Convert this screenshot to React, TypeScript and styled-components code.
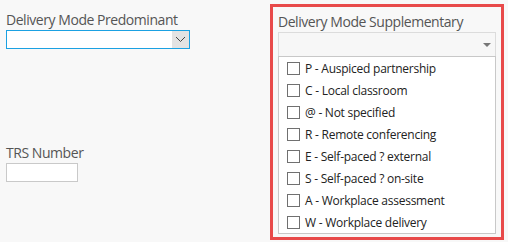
import React from "react";
import styled, { createGlobalStyle } from "styled-components";

const Global = createGlobalStyle`
  html, body { margin: 0; padding: 0; background: #f8f8f8; }
  body { font-family: "Open Sans", "Noto Sans", sans-serif; }
`;

const Page = styled.div`
  display: flex;
  width: 508px;
  height: 242px;
  box-sizing: border-box;
`;

const LeftCol = styled.div`
  width: 270px;
  padding-left: 6px;
  box-sizing: border-box;
  display: flex;
  flex-direction: column;
`;

const Label = styled.div<{ $top: number }>`
  margin-top: ${(p) => p.$top}px;
  height: 21px;
  font-size: 14px;
  line-height: 21px;
  color: #555;
  letter-spacing: -0.45px;
  white-space: nowrap;
`;

const Combo = styled.div`
  width: 184px;
  height: 19px;
  box-sizing: border-box;
  border: 1px solid #1ba1e2;
  background: #fff;
  display: flex;
  justify-content: flex-end;
`;

const ComboButton = styled.div`
  width: 17px;
  height: 100%;
  background: #e3e3e3;
  display: flex;
  align-items: center;
  justify-content: center;
`;

const TextBox = styled.div`
  width: 72px;
  height: 19px;
  box-sizing: border-box;
  border: 1px solid #c9c9c9;
  background: #fff;
`;

const RedBox = styled.div`
  margin-top: 4px;
  width: 234px;
  height: 236px;
  box-sizing: border-box;
  border: 3px solid #e84a4a;
  padding: 0 5px 0 5px;
  display: flex;
  flex-direction: column;
`;

const Select = styled.div`
  width: 218px;
  height: 24px;
  box-sizing: border-box;
  border: 1px solid #dcdcdc;
  border-bottom: none;
  background: #f7f7f7;
  display: flex;
  align-items: center;
  justify-content: flex-end;
  padding-right: 4px;
`;

const List = styled.div`
  width: 218px;
  box-sizing: border-box;
  border: 1px solid #c8c8c8;
  background: #fff;
  display: flex;
  flex-direction: column;
`;

const Row = styled.label`
  height: 22px;
  display: flex;
  align-items: center;
  padding-left: 8px;
  font-size: 12px;
  color: #222;
  white-space: nowrap;
  letter-spacing: -0.25px;
`;

const Box = styled.span`
  width: 13px;
  height: 13px;
  box-sizing: border-box;
  border: 1px solid #707070;
  background: #fff;
  margin-right: 5px;
  flex: none;
`;

const items = [
  "P - Auspiced partnership",
  "C - Local classroom",
  "@ - Not specified",
  "R - Remote conferencing",
  "E - Self-paced ? external",
  "S - Self-paced ? on-site",
  "A - Workplace assessment",
  "W - Workplace delivery",
];

export default function App() {
  return (
    <>
      <Global />
      <Page>
        <LeftCol>
          <Label $top={9}>Delivery Mode Predominant</Label>
          <Combo>
            <ComboButton>
              <svg width="11" height="7" viewBox="0 0 11 7">
                <path d="M1 1 L5.5 5.5 L10 1" fill="none" stroke="#444" strokeWidth="1" />
              </svg>
            </ComboButton>
          </Combo>
          <Label $top={93}>TRS Number</Label>
          <TextBox />
        </LeftCol>
        <RedBox>
          <Label $top={4}>Delivery Mode Supplementary</Label>
          <Select>
            <svg width="8" height="4" viewBox="0 0 8 4">
              <path d="M0 0 L8 0 L4 4 Z" fill="#777" />
            </svg>
          </Select>
          <List>
            {items.map((t) => (
              <Row key={t}>
                <Box />
                {t}
              </Row>
            ))}
          </List>
        </RedBox>
      </Page>
    </>
  );
}
